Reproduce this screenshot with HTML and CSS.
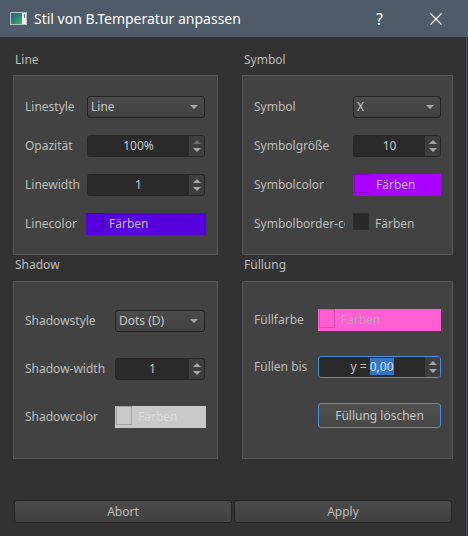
FILE: index.html
```html
<!DOCTYPE html>
<html lang="de">
<head>
<meta charset="utf-8">
<title>Stil von B.Temperatur anpassen</title>
<link rel="stylesheet" href="styles.css">
</head>
<body>
<div class="window">
  <div class="titlebar">
    <svg class="appicon" width="17" height="13" viewBox="0 0 17 13">
      <defs>
        <linearGradient id="ig" x1="0" y1="0" x2="1" y2="1">
          <stop offset="0" stop-color="#2b5f86"/>
          <stop offset="0.55" stop-color="#2f8a73"/>
          <stop offset="1" stop-color="#57b35a"/>
        </linearGradient>
      </defs>
      <rect x="0.5" y="0.5" width="16" height="12" fill="#eef1f3" stroke="#b9c2ca"/>
      <rect x="1" y="1" width="11" height="11" fill="url(#ig)"/>
      <rect x="14" y="2" width="1" height="4" fill="#7b8793"/>
    </svg>
    <span class="title">Stil von B.Temperatur anpassen</span>
    <span class="help">?</span>
    <svg class="close" width="12" height="12" viewBox="0 0 12 12">
      <path d="M0.5 0.5 L11.5 11.5 M11.5 0.5 L0.5 11.5" stroke="#ffffff" stroke-width="1.1" fill="none"/>
    </svg>
  </div>
  <div class="body">
    <div class="content">
      <div class="groups">
        <section class="group g-line">
          <div class="group-title">Line</div>
          <div class="box">
            <span class="lbl">Linestyle</span>
            <div class="combo"><span>Line</span><span class="arrow"></span></div>
            <span class="lbl">Opazität</span>
            <div class="spin"><span class="val">100%</span><span class="btns"><span class="up dim"></span><span class="down"></span></span></div>
            <span class="lbl">Linewidth</span>
            <div class="spin"><span class="val">1</span><span class="btns"><span class="up"></span><span class="down"></span></span></div>
            <span class="lbl">Linecolor</span>
            <div class="color c-line"><span class="sw"></span><span>Färben</span></div>
          </div>
        </section>
        <section class="group g-symbol">
          <div class="group-title">Symbol</div>
          <div class="box">
            <span class="lbl">Symbol</span>
            <div class="combo"><span>X</span><span class="arrow"></span></div>
            <span class="lbl">Symbolgröße</span>
            <div class="spin"><span class="val">10</span><span class="btns"><span class="up"></span><span class="down"></span></span></div>
            <span class="lbl">Symbolcolor</span>
            <div class="color c-symbol"><span class="sw"></span><span>Färben</span></div>
            <span class="lbl clip">Symbolborder-color</span>
            <div class="color c-border"><span class="sw"></span><span>Färben</span></div>
          </div>
        </section>
        <section class="group g-shadow row2">
          <div class="group-title">Shadow</div>
          <div class="box">
            <span class="lbl">Shadowstyle</span>
            <div class="combo"><span>Dots (D)</span><span class="arrow"></span></div>
            <span class="lbl">Shadow-width</span>
            <div class="spin"><span class="val">1</span><span class="btns"><span class="up"></span><span class="down"></span></span></div>
            <span class="lbl">Shadowcolor</span>
            <div class="color c-shadow"><span class="sw"></span><span>Färben</span></div>
          </div>
        </section>
        <section class="group g-fill row2">
          <div class="group-title">Füllung</div>
          <div class="box">
            <span class="lbl">Füllfarbe</span>
            <div class="color c-fill"><span class="sw"></span><span>Färben</span></div>
            <span class="lbl">Füllen bis</span>
            <div class="spin focus"><span class="val">y = <span class="sel">0,00</span></span><span class="btns"><span class="up"></span><span class="down"></span></span></div>
            <span class="lbl"></span>
            <div class="pbtn focus">Füllung löschen</div>
          </div>
        </section>
      </div>
      <div class="buttons">
        <div class="btn">Abort</div>
        <div class="btn">Apply</div>
      </div>
    </div>
    <div class="edge"></div>
  </div>
</div>
</body>
</html>
```
FILE: styles.css
```css
* { box-sizing: border-box; }
html, body { margin: 0; padding: 0; }
body {
  width: 468px;
  height: 536px;
  overflow: hidden;
  background: #323232;
  font-family: "Noto Sans", "Open Sans", sans-serif;
  font-size: 12px;
  color: #bdbdbd;
}
.window { display: flex; flex-direction: column; height: 536px; }

.titlebar {
  height: 37px;
  flex: none;
  background: #505b69;
  display: flex;
  align-items: center;
  color: #ffffff;
}
.appicon { margin-left: 10px; flex: none; }
.title { margin-left: 7px; font-size: 14px; white-space: nowrap; }
.help { margin-left: auto; margin-right: 47px; font-size: 16px; }
.close { margin-right: 26px; flex: none; }

.body { flex: 1; display: flex; }
.content {
  flex: 1;
  padding: 13px 0 0 13px;
  display: flex;
  flex-direction: column;
}
.edge {
  width: 3px;
  background: linear-gradient(to right, #292929 0 1px, #4e5666 1px 2px, #2e2e2e 2px);
}

.groups {
  display: grid;
  grid-template-columns: 205px 211px;
  column-gap: 24px;
}
.group-title {
  height: 25px;
  padding: 2px 0 0 2px;
  line-height: 16px;
  color: #bdbdbd;
}
.row2 .group-title { height: 26px; }

.box {
  border: 1px solid #575757;
  background: #424242;
  display: grid;
  align-content: start;
  grid-auto-rows: 22px;
  padding: 20px 12px 0 11px;
  row-gap: 17px;
}
.g-line .box { height: 180px; grid-template-columns: 62px 118px; }
.g-symbol .box { height: 180px; padding-right: 11px; grid-template-columns: 99px 88px; }
.g-shadow .box { height: 178px; padding-top: 28px; row-gap: 26px; grid-template-columns: 90px 90px; }
.g-fill .box {
  height: 178px;
  padding: 27px 11px 0 11px;
  row-gap: 25px;
  grid-template-columns: 64px 123px;
  grid-template-rows: 22px 22px 25px;
}

.lbl {
  line-height: 22px;
  white-space: nowrap;
  overflow: hidden;
  color: #bdbdbd;
}
.lbl.clip { width: 91px; }

.combo {
  border: 1px solid #232323;
  border-radius: 3px;
  background: linear-gradient(#4b4b4b, #414141);
  padding-left: 3px;
  display: flex;
  align-items: center;
  justify-content: space-between;
  color: #c6c6c6;
  line-height: 20px;
}
.arrow {
  width: 0; height: 0;
  border-left: 4px solid transparent;
  border-right: 4px solid transparent;
  border-top: 4px solid #a8a8a8;
  margin-right: 6px;
}

.spin {
  display: flex;
  border: 1px solid #262626;
  border-radius: 3px;
  background: #2a2a2a;
  overflow: hidden;
}
.spin .val {
  flex: 1;
  text-align: center;
  line-height: 20px;
  color: #c6c6c6;
}
.spin .btns {
  width: 15px;
  background: #3e3e3e;
  display: flex;
  flex-direction: column;
  align-items: center;
  justify-content: center;
  gap: 4px;
}
.up, .down {
  width: 0; height: 0;
  border-left: 4px solid transparent;
  border-right: 4px solid transparent;
}
.up { border-bottom: 4px solid #a6a6a6; }
.down { border-top: 4px solid #a6a6a6; }
.up.dim { border-bottom-color: #6c6c6c; }

.spin.focus { border-color: #4a8fd9; }
.sel { background: #3276c8; color: #d8e6f6; }

.color {
  display: flex;
  align-items: flex-start;
  gap: 6px;
  color: #bdbdbd;
  line-height: 22px;
}
.color .sw {
  width: 16px;
  height: 19px;
  margin-left: 1px;
  flex: none;
  border: 1px solid rgba(0, 0, 0, 0.18);
}
.c-line { background: #5500dc; margin-left: -1px; margin-right: -1px; }
.c-symbol { background: #a900ff; }
.c-border .sw { background: #292929; border-color: #2f2f2f; height: 17px; margin-left: 0; }
.c-shadow { background: #c9c9c9; color: #dcdcdc; margin-right: -1px; }
.c-shadow .sw { border-color: #a2a2a2; }
.c-fill { background: #ff5fd2; color: #b9a2b5; }
.c-fill .sw { border-color: #d94eb2; }

.pbtn {
  border: 1px solid #4a8fd9;
  border-radius: 3px;
  background: linear-gradient(#515151, #464646);
  text-align: center;
  line-height: 23px;
  color: #c6c6c6;
}

.buttons {
  margin-top: 41px;
  padding-left: 1px;
  display: flex;
  gap: 2px;
}
.btn {
  width: 218px;
  height: 23px;
  border: 1px solid #242424;
  border-radius: 3px;
  background: linear-gradient(#4a4a4a, #424242);
  text-align: center;
  line-height: 21px;
  color: #bdbdbd;
}
```
